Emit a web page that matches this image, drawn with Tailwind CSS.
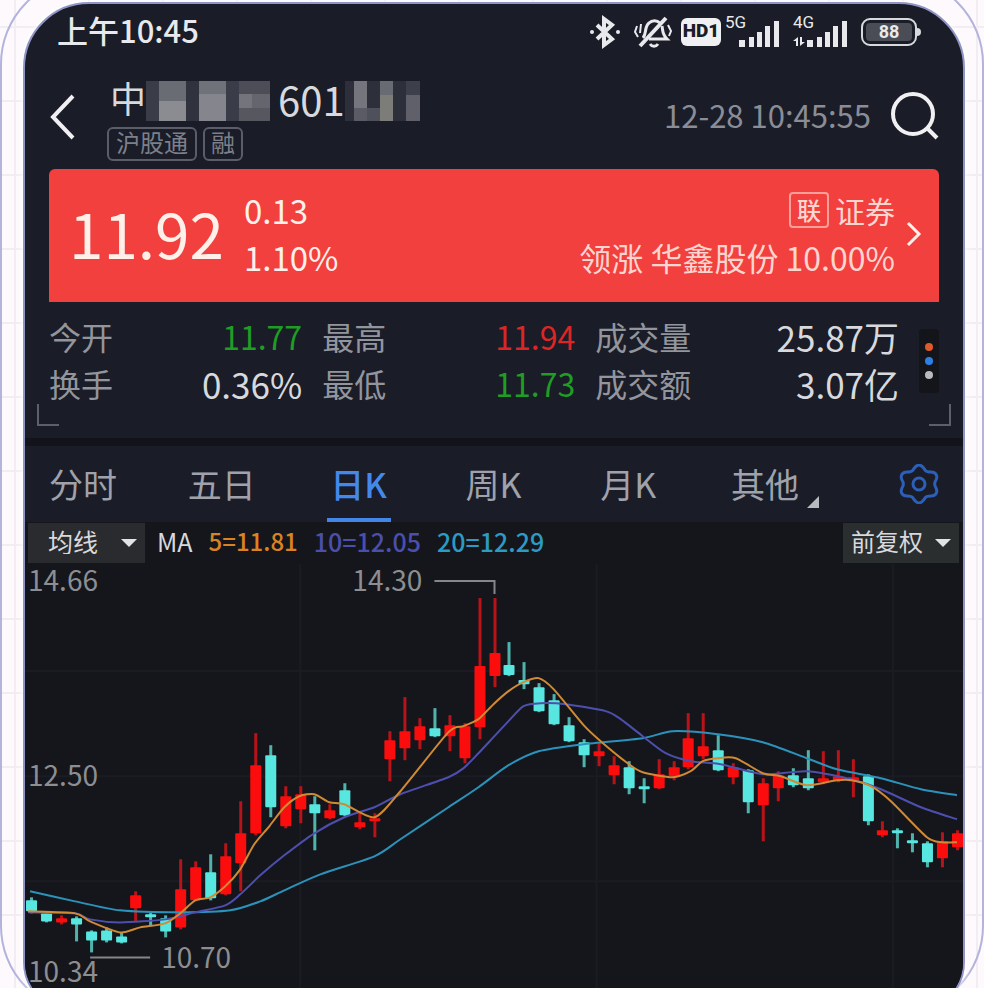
<!DOCTYPE html>
<html lang="zh-CN">
<head>
    <meta charset="UTF-8">
    <meta name="viewport" content="width=device-width, initial-scale=1.0">
    <title>日K 行情</title>
    <script src="https://cdn.jsdelivr.net/npm/@tailwindcss/browser@4"></script>
</head>
<body class="h-screen overflow-hidden bg-[#fdf9fc] bg-[linear-gradient(#f1edf3_2px,transparent_2px),linear-gradient(90deg,#f1edf3_2px,transparent_2px)] bg-[size:100%_74px,74px_100%] bg-[position:0_26px,14px_0] font-['Noto_Sans_CJK_SC',sans-serif] text-[#d8d9dd]">
    <!-- Phone frame -->
    <div class="-mt-6 rounded-[88px] border-2 border-[#b3b3dc] pl-[21px] pr-[17px] pt-6">
        <main class="relative overflow-hidden rounded-t-[66px] rounded-b-[50px] border-2 border-[#8f94c6] bg-[#1a1c27] shadow-[0_0_10px_#ffffff]">

            <!-- Status bar -->
            <div class="flex h-[55px] items-center justify-between pl-8 pr-[42px] pb-1">
                <span class="text-[31px] leading-none font-medium text-[#e8e9ec]">上午10:45</span>
                <div class="flex items-center pt-1 text-[#e8e9ec]">
                    <svg class="h-9 w-8" viewBox="0 0 32 36" fill="none" stroke="currentColor" stroke-width="4">
                        <path d="M8 11l15 14-8 6V5l8 6L8 25"/>
                        <circle cx="3" cy="18" r="2" fill="currentColor" stroke="none"/>
                        <circle cx="29" cy="18" r="2" fill="currentColor" stroke="none"/>
                    </svg>
                    <svg class="ml-3 h-9 w-10" viewBox="0 0 40 36" fill="none" stroke="currentColor" stroke-width="3">
                        <path d="M10 24c4-5 1-11 6-15 3-3 8-3 11 0M29 12c1 5 0 8 5 13H16M17 30c2 3 6 3 8 0"/>
                        <path d="M33 4L7 32" stroke-width="4"/>
                        <path d="M4 12l-2 6 3 5M8 10l-1 9M35 11l3 6-2 5" stroke-width="2"/>
                    </svg>
                    <span class="ml-2 flex h-7 w-10 items-center justify-center rounded-md bg-[#f0f0f2] font-[Roboto] text-[19px] font-black text-[#1a1c27]">HD1</span>
                    <div class="relative ml-1 h-9 w-14">
                        <span class="absolute left-0 top-0 font-[Roboto] text-[17px] leading-none">5G</span>
                        <svg class="absolute inset-0 h-9 w-14" viewBox="0 0 56 36" fill="currentColor">
                            <path d="M14 26h6v7h-6zM24 23h5v10h-5zM32 18h5v15h-5zM40 12h5v21h-5zM49 7h5v26h-5z"/>
                        </svg>
                    </div>
                    <div class="relative ml-3 h-9 w-14">
                        <span class="absolute left-0 top-0 font-[Roboto] text-[17px] leading-none">4G</span>
                        <svg class="absolute inset-0 h-9 w-14" viewBox="0 0 56 36" fill="currentColor">
                            <path d="M14 26h6v7h-6zM24 23h5v10h-5zM32 18h5v15h-5zM40 12h5v21h-5zM49 7h5v26h-5z"/>
                            <path d="M0 27l5-4v9H3v-5zM7 23h2v5h3l-5 4z"/>
                        </svg>
                    </div>
                    <div class="ml-3 flex items-center">
                        <div class="flex h-7 w-14 rounded-[9px] border-2 border-[#d8d9dd] p-[3px]">
                            <span class="flex flex-1 items-center justify-center rounded-[4px] bg-[#4b4d56] font-[Roboto] text-[18px] font-bold">88</span>
                        </div>
                        <i class="h-2 w-1 rounded-r bg-[#d8d9dd]"></i>
                    </div>
                </div>
            </div>

            <!-- Header -->
            <header class="flex h-[110px] items-center pl-6 pr-6 pb-1">
                <button aria-label="返回" class="pt-2">
                    <svg class="h-12 w-7" viewBox="0 0 28 48" fill="none" stroke="#f0f0f2" stroke-width="4">
                        <path d="M24 4L4 25l20 21"/>
                    </svg>
                </button>
                <div class="ml-[30px] pt-4">
                    <div class="flex h-11 items-center pl-[3px] leading-none">
                        <span class="pb-2 text-4xl">中</span>
                        <svg class="h-10 w-[124px]" viewBox="0 0 124 40" shape-rendering="crispEdges">
                            <rect width="124" height="40" fill="#3a3c48"/>
                            <rect x="13" width="27" height="20" fill="#6a6c74"/>
                            <rect x="13" y="20" width="27" height="20" fill="#8b8c92"/>
                            <rect x="40" width="13" height="40" fill="#30333e"/>
                            <rect x="53" width="27" height="13" fill="#707279"/>
                            <rect x="53" y="13" width="27" height="27" fill="#85868d"/>
                            <rect x="93" width="31" height="13" fill="#4c4d57"/>
                            <rect x="93" y="13" width="13" height="14" fill="#74757c"/>
                            <rect x="106" y="13" width="18" height="14" fill="#64656d"/>
                            <rect x="93" y="27" width="31" height="13" fill="#56575f"/>
                        </svg>
                        <span class="ml-2 pb-1 text-[40px]">601</span>
                        <svg class="h-10 w-[75px]" viewBox="0 0 75 40" shape-rendering="crispEdges">
                            <rect width="75" height="40" fill="#2d303b"/>
                            <rect x="9" width="13" height="27" fill="#75767d"/>
                            <rect x="9" y="27" width="13" height="13" fill="#5a5b64"/>
                            <rect x="22" y="27" width="13" height="13" fill="#4e505a"/>
                            <rect x="35" width="13" height="14" fill="#696b72"/>
                            <rect x="35" y="14" width="13" height="26" fill="#7c7d78"/>
                            <rect x="61" width="14" height="14" fill="#3d3f4a"/>
                            <rect x="61" y="14" width="14" height="26" fill="#5f6069"/>
                        </svg>
                    </div>
                    <div class="mt-1 flex gap-[6px] text-2xl leading-none text-[#7d808a]">
                        <span class="flex h-[34px] items-center rounded-md border-2 border-[#5b5e69] px-[7px] pb-1">沪股通</span>
                        <span class="flex h-[34px] items-center rounded-md border-2 border-[#5b5e69] px-[6px] pb-1">融</span>
                    </div>
                </div>
                <time class="ml-auto pt-1 text-[31px] leading-none text-[#8b8d96]">12-28 10:45:55</time>
                <button aria-label="搜索" class="ml-5 pt-2">
                    <svg class="h-12 w-12" viewBox="0 0 48 48" fill="none" stroke="#f0f0f2" stroke-width="4">
                        <circle cx="22" cy="22" r="20"/>
                        <path d="M36 36l10 10"/>
                    </svg>
                </button>
            </header>

            <!-- Quote card -->
            <a href="#" class="mx-6 flex h-[133px] items-center rounded-t-md bg-[#f2403f] pb-1 pl-5 pr-4 text-[#fff0ea]">
                <span class="pb-1 text-[62px] leading-none">11.92</span>
                <span class="ml-5 flex flex-col text-[33px] leading-[47px]">
                    <span>0.13</span>
                    <span>1.10%</span>
                </span>
                <span class="ml-auto flex flex-col items-end text-[32px] leading-[47px] text-[#ffd5cf]">
                    <span class="flex items-center gap-[6px] text-[30px]">
                        <span class="flex h-9 w-10 items-center justify-center rounded-sm border-2 border-[#ff9f99] text-2xl font-medium">联</span>
                        证券
                    </span>
                    <span>领涨 华鑫股份 10.00%</span>
                </span>
                <svg class="ml-2 h-7 w-5" viewBox="0 0 20 28" fill="none" stroke="currentColor" stroke-width="3">
                    <path d="M5 3l11 11L5 25"/>
                </svg>
            </a>

            <!-- Stats -->
            <section class="relative flex h-[136px] items-start pl-6 pr-6 pt-[11px]">
                <dl class="grid flex-1 grid-cols-[5fr_5fr_6fr] gap-x-5 text-[32px] leading-[47px]">
                    <div class="flex justify-between"><dt class="text-[#93959d]">今开</dt><dd class="text-[#1f9d25]">11.77</dd></div>
                    <div class="flex justify-between"><dt class="text-[#93959d]">最高</dt><dd class="text-[#dc2626]">11.94</dd></div>
                    <div class="flex justify-between"><dt class="text-[#93959d]">成交量</dt><dd class="text-[35px]">25.87万</dd></div>
                    <div class="flex justify-between"><dt class="text-[#93959d]">换手</dt><dd class="text-[35px]">0.36%</dd></div>
                    <div class="flex justify-between"><dt class="text-[#93959d]">最低</dt><dd class="text-[#1f9d25]">11.73</dd></div>
                    <div class="flex justify-between"><dt class="text-[#93959d]">成交额</dt><dd class="text-[35px]">3.07亿</dd></div>
                </dl>
                <button aria-label="更多" class="ml-5 mt-4 flex h-16 w-5 flex-col items-center justify-center gap-[6px] rounded bg-[#14151b]">
                    <i class="size-2 rounded-full bg-[#dd5a2b]"></i>
                    <i class="size-2 rounded-full bg-[#2f80e4]"></i>
                    <i class="size-2 rounded-full bg-[#b9babd]"></i>
                </button>
                <i class="absolute bottom-3 left-3 size-[22px] border-b-2 border-l-2 border-[#5d6069]"></i>
                <i class="absolute bottom-3 right-3 size-[22px] border-b-2 border-r-2 border-[#5d6069]"></i>
            </section>

            <div class="h-2 bg-[#12131b]"></div>

            <!-- Period tabs -->
            <nav class="flex h-[76px] items-stretch px-6 text-[34px] leading-none text-[#a0a2ab]">
                <div class="mr-20 flex flex-1 justify-between">
                    <button>分时</button>
                    <button>五日</button>
                    <button class="w-16 border-y-4 border-t-transparent border-b-[#4486e8] font-medium text-[#4389ec]">日K</button>
                    <button class="w-16">周K</button>
                    <button class="w-16">月K</button>
                    <button class="flex items-center gap-2">其他
                        <svg class="mt-9 size-3" viewBox="0 0 12 12" fill="#b9babf"><path d="M12 0v12H0z"/></svg>
                    </button>
                </div>
                <button aria-label="设置">
                    <svg class="size-10" viewBox="0 0 40 40" fill="none" stroke="#2c5fb8" stroke-width="3" stroke-linejoin="round">
                        <path d="M20 1c3 0 4 2 6 5 1 2 3 2 6 2 5 0 7 4 5 8-2 3-2 5 0 8 2 4 0 8-5 8-3 0-5 0-6 2-2 3-3 5-6 5s-4-2-6-5c-1-2-3-2-6-2-5 0-7-4-5-8 2-3 2-5 0-8-2-4 0-8 5-8 3 0 5 0 6-2 2-3 3-5 6-5z"/>
                        <circle cx="20" cy="20" r="6"/>
                    </svg>
                </button>
            </nav>

            <!-- Moving averages -->
            <div class="flex h-[42px] items-center bg-[#15161b] pl-[3px] pr-1 text-[25px] leading-none font-medium">
                <label class="relative">
                    <select aria-label="指标" class="h-10 w-[117px] appearance-none bg-[#2a2b2f] pb-1 pl-5 text-[25px] font-normal text-[#d8d9dd]">
                        <option>均线</option>
                    </select>
                    <svg class="pointer-events-none absolute right-2 top-4 h-2 w-4" viewBox="0 0 16 8" fill="#e3e3e5"><path d="M0 0h16L8 8z"/></svg>
                </label>
                <span class="ml-3 pb-1 font-normal">MA</span>
                <span class="ml-4 pb-1 text-[24px] text-[#d98324]">5=11.81</span>
                <span class="ml-4 pb-1 text-[#4a4fae]">10=12.05</span>
                <span class="ml-4 pb-1 text-[#2b9bc4]">20=12.29</span>
                <label class="relative ml-auto">
                    <select aria-label="复权" class="h-10 w-[116px] appearance-none bg-[#2a2e2f] pb-1 pl-2 text-2xl font-normal text-[#d8d9dd]">
                        <option>前复权</option>
                    </select>
                    <svg class="pointer-events-none absolute right-2 top-4 h-2 w-4" viewBox="0 0 16 8" fill="#e3e3e5"><path d="M0 0h16L8 8z"/></svg>
                </label>
            </div>

            <!-- K-line chart -->
            <svg id="chart" class="block h-auto w-full overflow-visible bg-[#15161b]" viewBox="25 563 937 446" fill="none">
                <path d="M25 670H962M25 775H962M25 880H962M300 563V1009M596 563V1009M892 563V1009" stroke="#1b1c23" stroke-width="2"/>
                <g id="candles"></g>
                <g id="averages" stroke-width="2"></g>
                <path d="M434 580H494V593M90 956H150" stroke="#85868a" stroke-width="2"/>
                <g fill="#8d8e92" class="text-[28px]">
                    <text x="28" y="590">14.66</text>
                    <text x="28" y="785">12.50</text>
                    <text x="28" y="981">10.34</text>
                    <text x="352" y="590">14.30</text>
                    <text x="161" y="967">10.70</text>
                </g>
            </svg>
        </main>
    </div>

    <script>
        // direction, body top, body bottom, wick top, wick bottom
        const candles = [
            ['d', 899, 910, 896, 912], ['d', 912, 920, 911, 921], ['u', 917, 921, 914, 923], ['d', 917, 923, 915, 940],
            ['d', 930, 939, 929, 951], ['d', 929, 939, 926, 941], ['d', 935, 941, 931, 942], ['u', 894, 907, 890, 920],
            ['d', 913, 916, 911, 925], ['d', 917, 930, 914, 936], ['u', 888, 926, 858, 928], ['u', 866, 899, 860, 900],
            ['d', 871, 897, 853, 899], ['u', 855, 893, 842, 894], ['u', 832, 862, 800, 890], ['u', 764, 832, 732, 834],
            ['d', 754, 806, 744, 816], ['u', 795, 825, 785, 827], ['u', 793, 808, 785, 822], ['d', 803, 812, 795, 849],
            ['u', 809, 817, 803, 818], ['d', 789, 814, 782, 815], ['u', 821, 826, 812, 828], ['u', 817, 820, 812, 836],
            ['u', 739, 758, 730, 780], ['u', 730, 747, 696, 759], ['u', 725, 739, 717, 748], ['d', 727, 735, 707, 736],
            ['u', 724, 735, 714, 750], ['u', 725, 757, 722, 762], ['u', 665, 726, 597, 738], ['u', 652, 675, 597, 686],
            ['d', 664, 674, 641, 675], ['d', 679, 683, 661, 688], ['d', 686, 710, 682, 711], ['d', 699, 723, 693, 724],
            ['d', 724, 740, 716, 741], ['d', 741, 754, 738, 766], ['u', 750, 755, 742, 765], ['u', 764, 774, 755, 783],
            ['d', 766, 787, 760, 793], ['d', 785, 788, 777, 802], ['u', 773, 787, 758, 788], ['u', 766, 775, 760, 779],
            ['u', 737, 766, 712, 768], ['u', 745, 755, 712, 758], ['d', 749, 769, 734, 770], ['u', 766, 776, 762, 783],
            ['d', 769, 801, 768, 812], ['u', 782, 804, 777, 840], ['u', 774, 787, 770, 800], ['d', 774, 784, 767, 786],
            ['d', 777, 787, 749, 789], ['u', 777, 781, 750, 783], ['u', 775, 779, 749, 781], ['u', 776, 780, 758, 796],
            ['d', 775, 820, 773, 824], ['u', 829, 834, 820, 836], ['d', 829, 832, 827, 847], ['d', 839, 842, 832, 851],
            ['d', 842, 861, 840, 866], ['u', 840, 857, 831, 866], ['u', 832, 846, 829, 849]
        ];

        const averages = {
            '#2b93bb': [[30, 890], [75, 900], [120, 909], [180, 911], [230, 909], [260, 900], [284, 889], [320, 873], [374, 855], [400, 838], [448, 806], [478, 786], [508, 764], [538, 750], [583, 743], [642, 737], [672, 730], [717, 733], [762, 741], [806, 757], [836, 768], [880, 777], [920, 788], [956, 794]],
            '#4d4fae': [[28, 911], [75, 912], [90, 918], [120, 921], [165, 918], [195, 911], [225, 904], [240, 893], [260, 874], [284, 854], [314, 832], [344, 816], [374, 806], [400, 793], [448, 776], [463, 767], [478, 752], [493, 736], [508, 720], [523, 705], [540, 702], [565, 703], [605, 710], [620, 718], [642, 735], [665, 752], [690, 760], [720, 763], [762, 773], [806, 770], [850, 778], [880, 788], [920, 806], [956, 818]],
            '#d08a35': [[28, 910], [75, 912], [90, 920], [120, 931], [140, 926], [165, 922], [180, 912], [195, 899], [210, 896], [225, 885], [240, 868], [254, 843], [269, 825], [284, 806], [299, 795], [314, 793], [329, 801], [344, 803], [374, 816], [400, 790], [448, 731], [463, 725], [478, 718], [493, 703], [508, 690], [523, 681], [538, 677], [553, 688], [583, 724], [600, 740], [627, 762], [642, 771], [672, 776], [690, 770], [702, 760], [717, 757], [735, 757], [762, 772], [780, 775], [806, 784], [836, 779], [851, 779], [870, 785], [890, 800], [926, 836], [941, 841], [956, 841]]
        };

        function drawCandles() {
            const step = 14.92;
            document.getElementById('candles').innerHTML = candles.map(([dir, top, bottom, high, low], i) => {
                const x = Math.round(31 + i * step);
                const body = dir === 'u' ? '#fb0d0d' : '#57e6e0';
                const wick = dir === 'u' ? '#b81318' : '#4fb3ac';
                return `<rect x="${x - 1}" y="${high}" width="3" height="${low - high}" fill="${wick}"/>
                        <rect x="${x - 5}" y="${top}" width="11" height="${bottom - top}" rx="1" fill="${body}"/>`;
            }).join('');
        }

        function smoothPath(points) {
            let d = `M${points[0]}`;
            for (let i = 0; i < points.length - 1; i++) {
                const p0 = points[i - 1] || points[i];
                const p1 = points[i];
                const p2 = points[i + 1];
                const p3 = points[i + 2] || p2;
                d += `C${p1[0] + (p2[0] - p0[0]) / 8} ${p1[1] + (p2[1] - p0[1]) / 8} ${p2[0] - (p3[0] - p1[0]) / 8} ${p2[1] - (p3[1] - p1[1]) / 8} ${p2}`;
            }
            return d;
        }

        function drawAverages() {
            document.getElementById('averages').innerHTML = Object.entries(averages)
                .map(([color, points]) => `<path d="${smoothPath(points)}" stroke="${color}"/>`)
                .join('');
        }

        drawCandles();
        drawAverages();
    </script>
</body>
</html>
